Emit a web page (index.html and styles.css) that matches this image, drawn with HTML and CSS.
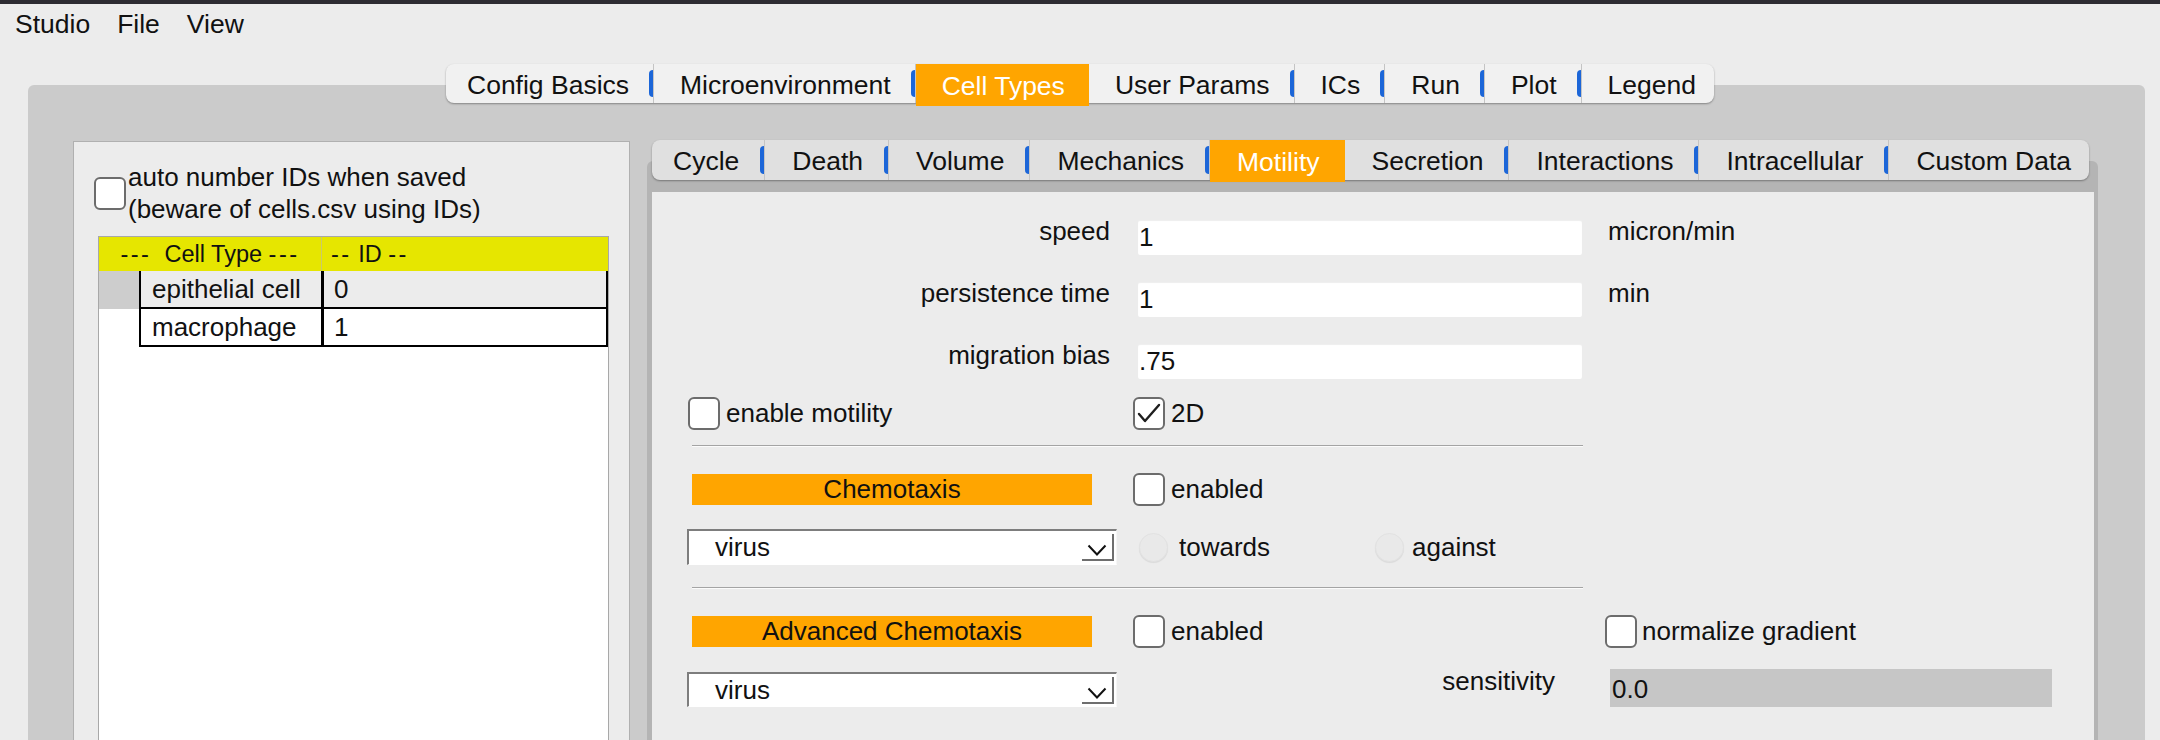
FILE: index.html
```html
<!DOCTYPE html>
<html>
<head>
<meta charset="utf-8">
<title>Studio</title>
<link rel="stylesheet" href="styles.css">
</head>
<body>
<div class="app">
  <div class="titlebar"></div>
  <nav class="menubar"><span>Studio</span><span>File</span><span>View</span></nav>

  <div class="maintabs-row">
    <div class="tabbar tabbar-main">
      <div class="tab first sep">Config Basics</div>
      <div class="tab sep">Microenvironment</div>
      <div class="tab active">Cell Types</div>
      <div class="tab sep">User Params</div>
      <div class="tab sep">ICs</div>
      <div class="tab sep">Run</div>
      <div class="tab sep">Plot</div>
      <div class="tab last">Legend</div>
    </div>
  </div>

  <div class="panel">
    <section class="celllist">
      <div class="autonum">
        <span class="checkbox"></span>
        <span class="autonum-label">auto number IDs when saved<br>(beware of cells.csv using IDs)</span>
      </div>
      <div class="table">
        <div class="thead">
          <div class="th th-type"><span class="dash">---</span>  Cell Type <span class="dash">---</span></div>
          <div class="th th-id"><span class="dash">--</span> ID <span class="dash">--</span></div>
        </div>
        <div class="tr selected">
          <div class="rowhead"></div>
          <div class="td td-type">epithelial cell</div>
          <div class="td td-id">0</div>
        </div>
        <div class="tr">
          <div class="rowhead"></div>
          <div class="td td-type">macrophage</div>
          <div class="td td-id">1</div>
        </div>
      </div>
    </section>

    <section class="celltype">
      <div class="tabbar tabbar-sub">
        <div class="tab first sep">Cycle</div>
        <div class="tab sep">Death</div>
        <div class="tab sep">Volume</div>
        <div class="tab sep">Mechanics</div>
        <div class="tab active">Motility</div>
        <div class="tab sep">Secretion</div>
        <div class="tab sep">Interactions</div>
        <div class="tab sep">Intracellular</div>
        <div class="tab last">Custom Data</div>
      </div>
      <div class="frame">
        <div class="content">
          <div class="fields">
            <div class="field">
              <span class="field-label">speed</span>
              <span class="input">1</span>
              <span class="field-unit">micron/min</span>
            </div>
            <div class="field">
              <span class="field-label">persistence time</span>
              <span class="input">1</span>
              <span class="field-unit">min</span>
            </div>
            <div class="field">
              <span class="field-label">migration bias</span>
              <span class="input">.75</span>
            </div>
          </div>

          <div class="checkrow">
            <div class="check check-wide">
              <span class="checkbox"></span><span class="check-label">enable motility</span>
            </div>
            <div class="check">
              <span class="checkbox checked"><svg viewBox="0 0 28 29" width="28" height="29"><polyline points="4,15 10,22 24,6" fill="none" stroke="#1e1e1e" stroke-width="2.4" stroke-linecap="round" stroke-linejoin="round"/></svg></span><span class="check-label">2D</span>
            </div>
          </div>

          <div class="separator sep-first"></div>

          <div class="sectionrow">
            <div class="section-title">Chemotaxis</div>
            <div class="check">
              <span class="checkbox"></span><span class="check-label">enabled</span>
            </div>
          </div>

          <div class="comborow">
            <div class="combo">
              <span class="combo-text">virus</span>
              <span class="combo-arrow"><svg viewBox="0 0 20 12" width="20" height="12"><polyline points="1.5,1.5 10,10.5 18.5,1.5" fill="none" stroke="#111" stroke-width="2"/></svg></span>
            </div>
            <div class="radio-item radio-towards"><span class="radio"></span><span class="radio-label">towards</span></div>
            <div class="radio-item"><span class="radio"></span><span class="radio-label">against</span></div>
          </div>

          <div class="separator sep-second"></div>

          <div class="sectionrow sectionrow-adv">
            <div class="section-title">Advanced Chemotaxis</div>
            <div class="check check-adv">
              <span class="checkbox"></span><span class="check-label">enabled</span>
            </div>
            <div class="check">
              <span class="checkbox"></span><span class="check-label check-label-tight">normalize gradient</span>
            </div>
          </div>

          <div class="comborow comborow-adv">
            <div class="combo">
              <span class="combo-text">virus</span>
              <span class="combo-arrow"><svg viewBox="0 0 20 12" width="20" height="12"><polyline points="1.5,1.5 10,10.5 18.5,1.5" fill="none" stroke="#111" stroke-width="2"/></svg></span>
            </div>
            <span class="sens-label">sensitivity</span>
            <span class="input input-disabled">0.0</span>
          </div>
        </div>
      </div>
    </section>
  </div>
</div>
</body>
</html>
```

FILE: styles.css
```css
* {
  box-sizing: border-box;
}

html,
body {
  margin: 0;
  padding: 0;
}

body {
  width: 2160px;
  height: 740px;
  overflow: hidden;
  background: #ececec;
  font-family: "Liberation Sans", Arial, sans-serif;
  font-size: 26px;
  color: #111;
}

.app {
  display: flex;
  flex-direction: column;
  height: 740px;
}

.titlebar {
  flex: none;
  height: 4px;
  background: #2d2c32;
}

.menubar {
  flex: none;
  display: flex;
  gap: 27px;
  height: 36px;
  padding: 5px 0 0 15px;
  line-height: 30px;
  font-size: 26.5px;
}

/* ---------- tab bars ---------- */

.maintabs-row {
  flex: none;
  display: flex;
  justify-content: center;
  margin-top: 24px;
  position: relative;
  z-index: 2;
}

.tabbar {
  display: flex;
  border-radius: 8px;
  box-shadow: 0 1px 2px rgba(0, 0, 0, 0.35);
}

.tabbar-main {
  height: 39px;
  background: #f1f1f1;
}

.tabbar-sub {
  align-self: flex-start;
  height: 40px;
  margin-left: 5px;
  background: #e0e0e0;
  position: relative;
  z-index: 1;
}

.tab {
  position: relative;
  display: flex;
  align-items: center;
  padding: 3px 24px 0 26px;
  font-size: 26.5px;
  white-space: nowrap;
  color: #111;
}

.tabbar-sub .tab {
  padding: 2px 25px 0 27px;
}

.tab.first,
.tabbar-sub .tab.first {
  padding-left: 21px;
}

.tab.last,
.tabbar-sub .tab.last {
  padding-right: 18px;
}

.tab.sep {
  border-right: 1px solid #c4c4c4;
}

.tab.sep::after {
  content: "";
  position: absolute;
  right: 0;
  top: 6px;
  bottom: 6px;
  width: 4px;
  background: #1c66d8;
  border-radius: 4px 0 0 4px;
}

.tab.active {
  align-self: flex-start;
  height: 42px;
  background: #ffa500;
  color: #fff;
}

/* ---------- main gray panel ---------- */

.panel {
  flex: 1;
  display: flex;
  gap: 17px;
  margin: -18px 15px 0 28px;
  padding: 55px 47px 0 45px;
  background: #cbcbcb;
  border-radius: 6px 6px 0 0;
  min-height: 0;
}

/* ---------- left: cell type list ---------- */

.celllist {
  flex: none;
  display: flex;
  flex-direction: column;
  width: 557px;
  margin-top: 1px;
  padding: 19px 20px 0 20px;
  background: #ececec;
  border: 1px solid #b0b0b0;
  border-bottom: none;
}

.autonum {
  display: flex;
  align-items: center;
}

.checkbox {
  flex: none;
  display: flex;
  align-items: center;
  justify-content: center;
  width: 32px;
  height: 33px;
  background: #fff;
  border: 2px solid #6c6c6c;
  border-radius: 6px;
}

.autonum-label {
  margin-left: 2px;
  line-height: 32px;
}

.table {
  flex: 1;
  width: 511px;
  margin: 11px 0 0 4px;
  background: #fff;
  border: 1px solid #a8a8a8;
  border-bottom: none;
}

.thead {
  display: grid;
  grid-template-columns: 222px 1fr;
  height: 34px;
  background: #e6e600;
  font-size: 23.5px;
  line-height: 34px;
}

.dash {
  letter-spacing: 2.5px;
}

.th-type {
  text-align: center;
  white-space: pre;
}

.th-id {
  padding-left: 9px;
  border-left: 1px solid #c9c96a;
  white-space: pre;
}

.tr {
  display: grid;
  grid-template-columns: 40px 182px 1fr;
  height: 38px;
}

.rowhead {
  background: #fff;
}

.tr.selected .rowhead {
  background: #cdcdcd;
}

.td {
  line-height: 36px;
  border-bottom: 2px solid #000;
  white-space: nowrap;
}

.tr.selected .td {
  background: #ececec;
}

.td-type {
  padding-left: 11px;
  border-left: 2px solid #000;
}

.td-id {
  padding-left: 10px;
  border-left: 3px solid #000;
  border-right: 2px solid #000;
}

/* ---------- right: cell type details ---------- */

.celltype {
  flex: 1;
  display: flex;
  flex-direction: column;
  min-width: 0;
}

.frame {
  flex: 1;
  display: flex;
  flex-direction: column;
  margin-top: -19px;
  padding: 31px 4px 0 5px;
  background: #b4b4b4;
  border-radius: 6px 6px 0 0;
}

.content {
  flex: 1;
  background: #ececec;
}

.fields {
  display: flex;
  flex-direction: column;
  gap: 27px;
  padding-top: 28px;
}

.field {
  display: flex;
  align-items: center;
  height: 35px;
}

.field-label {
  width: 458px;
  padding-bottom: 13px;
  line-height: 30px;
  text-align: right;
}

.field-unit {
  margin-left: 26px;
  padding-bottom: 13px;
  line-height: 30px;
}

.input {
  flex: none;
  width: 444px;
  height: 35px;
  margin-left: 28px;
  padding-left: 1px;
  line-height: 35px;
  background: #fff;
  border-radius: 2px;
  box-shadow: inset 0 1px 1px rgba(0, 0, 0, 0.07);
}

.checkrow {
  display: flex;
  align-items: center;
  height: 33px;
  margin-top: 18px;
  padding-left: 36px;
}

.check {
  display: flex;
  align-items: center;
}

.check-wide {
  width: 445px;
}

.check-label {
  margin-left: 6px;
  white-space: nowrap;
}

.check-label-tight {
  margin-left: 5px;
}

.separator {
  width: 891px;
  height: 2px;
  margin-left: 40px;
  border-top: 1px solid #a4a4a4;
  border-bottom: 1px solid #fbfbfb;
}

.sep-first {
  margin-top: 15px;
}

.sep-second {
  margin-top: 22px;
}

.sectionrow {
  display: flex;
  align-items: center;
  height: 33px;
  margin-top: 26px;
  padding-left: 40px;
}

.section-title {
  flex: none;
  width: 400px;
  height: 31px;
  margin-right: 41px;
  line-height: 31px;
  text-align: center;
  background: #ffa500;
  color: #111;
}

.check-adv {
  width: 472px;
}

.comborow {
  display: flex;
  align-items: center;
  height: 36px;
  margin-top: 23px;
  padding-left: 35px;
}

.combo {
  flex: none;
  display: flex;
  align-items: center;
  width: 430px;
  height: 36px;
  background: #fff;
  border-top: 2px solid #7d7d7d;
  border-left: 2px solid #7d7d7d;
  border-right: 1px solid #f6f6f6;
  border-bottom: 1px solid #fff;
}

.combo-text {
  padding-left: 26px;
}

.combo-arrow {
  display: flex;
  align-items: flex-end;
  justify-content: center;
  width: 32px;
  height: 27px;
  margin-left: auto;
  margin-right: 2px;
  padding-bottom: 3px;
  border-right: 2px solid #6e6e6e;
  border-bottom: 2px solid #6e6e6e;
}

.radio-item {
  display: flex;
  align-items: center;
}

.radio-towards {
  width: 236px;
  margin-left: 22px;
}

.radio {
  flex: none;
  width: 29px;
  height: 29px;
  border-radius: 50%;
  background: #e9e9e9;
  border: 1px solid #e2e2e2;
  box-shadow: 0 1px 1px rgba(0, 0, 0, 0.08);
}

.radio-label {
  margin-left: 11px;
}

.radio-item + .radio-item .radio-label {
  margin-left: 8px;
}

.sectionrow-adv {
  margin-top: 26px;
}

.comborow-adv {
  align-items: flex-end;
  height: 38px;
  margin-top: 21px;
}

.comborow-adv .combo {
  height: 35px;
}

.sens-label {
  align-self: center;
  width: 438px;
  padding-bottom: 14px;
  line-height: 30px;
  text-align: right;
}

.input-disabled {
  width: 442px;
  height: 38px;
  margin-left: 55px;
  padding-left: 2px;
  line-height: 40px;
  background: #c6c6c6;
  border-radius: 0;
  box-shadow: none;
}
```
